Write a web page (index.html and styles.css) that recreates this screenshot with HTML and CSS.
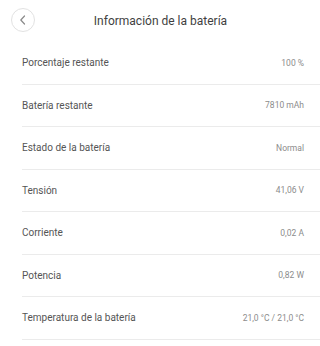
FILE: index.html
```html
<!DOCTYPE html>
<html lang="es">
<head>
<meta charset="utf-8">
<link rel="stylesheet" href="styles.css">
</head>
<body>
<div class="page">
  <header class="header">
    <button class="back" aria-label="Atrás">
      <svg width="10" height="12" viewBox="0 0 10 12"><path d="M6.5 2 L2.8 6 L6.5 10" fill="none" stroke="#8a8a8a" stroke-width="1.2" stroke-linecap="round" stroke-linejoin="round"/></svg>
    </button>
    <h1 class="title">Información de la batería</h1>
  </header>
  <ul class="list">
    <li class="row"><span class="label">Porcentaje restante</span><span class="value">100 %</span></li>
    <li class="row"><span class="label">Batería restante</span><span class="value">7810 mAh</span></li>
    <li class="row"><span class="label">Estado de la batería</span><span class="value">Normal</span></li>
    <li class="row"><span class="label">Tensión</span><span class="value">41,06 V</span></li>
    <li class="row"><span class="label">Corriente</span><span class="value">0,02 A</span></li>
    <li class="row"><span class="label">Potencia</span><span class="value">0,82 W</span></li>
    <li class="row"><span class="label">Temperatura de la batería</span><span class="value">21,0 °C / 21,0 °C</span></li>
  </ul>
</div>
</body>
</html>
```
FILE: styles.css
```css
* { box-sizing: border-box; }
html, body { margin: 0; padding: 0; background: #fff; }
body { font-family: Roboto, "Noto Sans", sans-serif; color: #333; }
.page { width: 320px; }
.header {
  position: relative;
  height: 42px;
  display: flex;
  align-items: center;
  justify-content: center;
}
.back {
  position: absolute;
  left: 11px;
  top: 8px;
  width: 24px;
  height: 24px;
  border-radius: 50%;
  border: 1px solid #e2e2e2;
  background: #fff;
  padding: 0;
  display: flex;
  align-items: center;
  justify-content: center;
}
.title {
  margin: 0;
  font-size: 12px;
  font-weight: 400;
  color: #3f3f3f;
  padding-left: 1px;
}
.list { list-style: none; margin: 0; padding: 0 0 0 22px; }
.row {
  height: 42.5px;
  display: flex;
  align-items: center;
  justify-content: space-between;
  padding-right: 16px;
  border-bottom: 1px solid #ebebeb;
}
.label { font-size: 10px; color: #555; }
.value { font-size: 8.5px; color: #8c8c8c; }
```
